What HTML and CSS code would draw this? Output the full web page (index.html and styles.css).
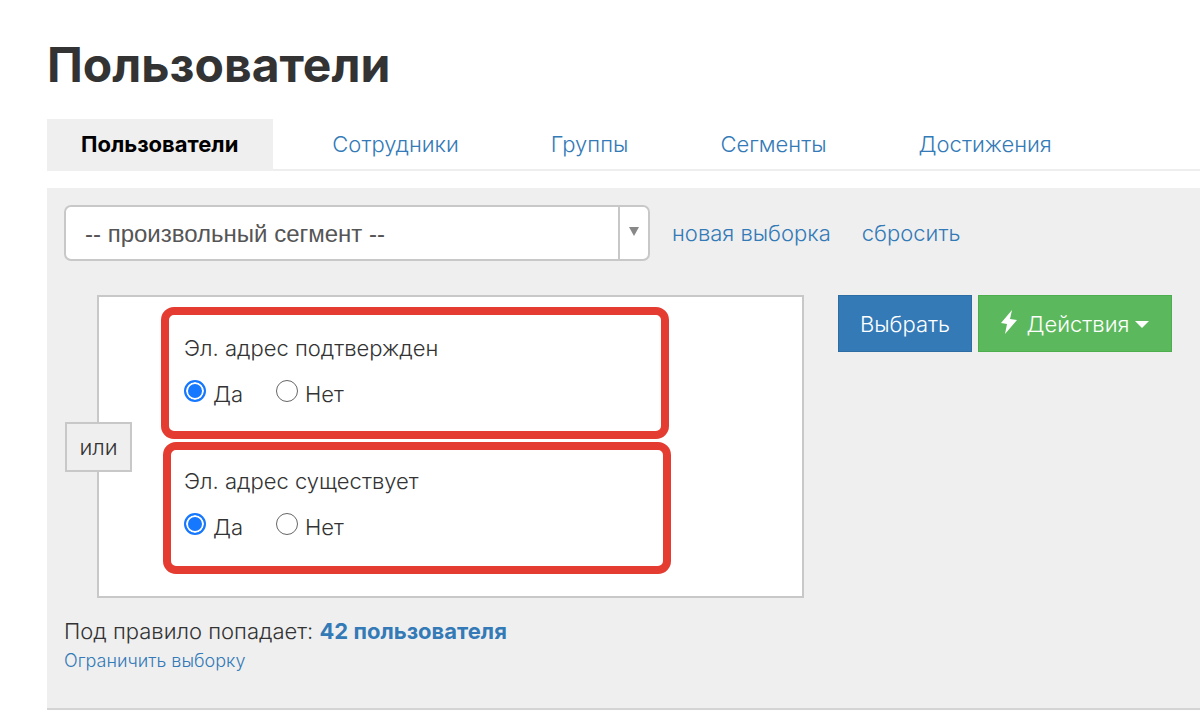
FILE: index.html
```html
<!DOCTYPE html>
<html lang="ru">
<head>
    <meta charset="UTF-8">
    <meta name="viewport" content="width=device-width, initial-scale=1.0">
    <title>Пользователи</title>
    <link rel="stylesheet" href="styles.css">
</head>
<body>
    <h1>Пользователи</h1>
    <nav class="tabs">
        <a class="tab active" href="#users">Пользователи</a>
        <a class="tab" href="#staff">Сотрудники</a>
        <a class="tab" href="#groups">Группы</a>
        <a class="tab" href="#segments">Сегменты</a>
        <a class="tab" href="#achievements">Достижения</a>
    </nav>
    <main class="panel">
        <div class="segment-row">
            <div class="segment-select">
                <select id="segment" aria-label="Сегмент">
                    <option>-- произвольный сегмент --</option>
                </select>
                <span class="segment-arrow"></span>
            </div>
            <a href="#new">новая выборка</a>
            <a href="#reset">сбросить</a>
        </div>
        <div class="filter-row">
            <div class="rules">
                <button class="operator" type="button">или</button>
                <fieldset class="rule">
                    <legend>Эл. адрес подтвержден</legend>
                    <div class="options">
                        <label><input type="radio" name="confirmed" checked><span>Да</span></label>
                        <label><input type="radio" name="confirmed"><span>Нет</span></label>
                    </div>
                </fieldset>
                <fieldset class="rule rule-last">
                    <legend>Эл. адрес существует</legend>
                    <div class="options">
                        <label><input type="radio" name="exists" checked><span>Да</span></label>
                        <label><input type="radio" name="exists"><span>Нет</span></label>
                    </div>
                </fieldset>
            </div>
            <div class="actions">
                <button class="btn btn-primary" type="button">Выбрать</button>
                <button class="btn btn-success" type="button">
                    <svg width="16" height="24" viewBox="0 0 16 24" aria-hidden="true"><path d="M11 0 L0 13 L6 14 L4 24 L16 10 L9 9 Z" fill="#fff"/></svg>
                    <span>Действия</span>
                    <span class="caret"></span>
                </button>
            </div>
        </div>
        <p class="total">Под правило попадает: <a href="#found">42 пользователя</a></p>
        <a class="limit" href="#limit">Ограничить выборку</a>
    </main>
</body>
</html>
```
FILE: styles.css
```css
:root {
    --link-color: #337ab7;
    --text-color: #333;
    --panel-color: #efefef;
    --border-color: #c8c8c8;
    --mark-color: #e43c30;
}
* {
    box-sizing: border-box;
}
body {
    margin: 0;
    padding: 35px 0 0 47px;
    font-family: Inter, 'Noto Sans', sans-serif;
    font-size: 22px;
    font-weight: 300;
    line-height: 30px;
    background-color: #fff;
    color: var(--text-color);
}
a {
    color: var(--link-color);
    text-decoration: none;
}
h1 {
    margin: 0 0 24px;
    font-size: 48px;
    font-weight: 700;
    line-height: 60px;
}
.tabs {
    display: flex;
    gap: 26px;
    border-bottom: 2px solid #eee;
}
.tab {
    padding: 10px 33px;
}
.tab.active {
    margin-bottom: -2px;
    padding: 10px 35px 12px 34px;
    background-color: var(--panel-color);
    color: #000;
    font-weight: 700;
}
.panel {
    margin-top: 17px;
    padding: 17px 28px 32px 17px;
    background-color: var(--panel-color);
    border-bottom: 2px solid #d4d4d4;
}
.segment-row {
    display: flex;
    align-items: center;
    gap: 31px;
    margin-bottom: 34px;
}
.segment-select {
    display: flex;
    width: 586px;
    height: 56px;
    margin-right: -9px;
    background-color: #fff;
    border: 2px solid var(--border-color);
    border-radius: 7px;
}
.segment-select select {
    flex: 1;
    appearance: none;
    padding: 0 19px;
    border: none;
    background: none;
    color: #555;
    font-family: 'Liberation Sans', Arial, sans-serif;
    font-size: 24px;
}
.segment-arrow {
    display: flex;
    align-items: center;
    justify-content: center;
    width: 30px;
    border-left: 2px solid var(--border-color);
}
.segment-arrow::before {
    content: '';
    margin-bottom: 3px;
    border: 5px solid transparent;
    border-top: 9px solid #888;
    border-bottom: none;
}
.filter-row {
    display: flex;
    align-items: flex-start;
    gap: 34px;
    padding-left: 33px;
}
.rules {
    position: relative;
    flex: 1;
    padding: 10px 133px 22px 62px;
    background-color: #fff;
    border: 2px solid var(--border-color);
}
.operator {
    position: absolute;
    top: 50%;
    left: -34px;
    width: 67px;
    height: 50px;
    margin-top: -25px;
    border: 2px solid var(--border-color);
    background-color: var(--panel-color);
    color: var(--text-color);
    font: inherit;
}
.rule {
    min-width: 0;
    height: 132px;
    margin: 0;
    padding: 18px 15px;
    border: 8px solid var(--mark-color);
    border-radius: 13px;
}
.rule legend {
    float: left;
    width: 100%;
    padding: 0;
}
.rule-last {
    margin: 3px -2px 0 2px;
    padding: 16px 13px;
}
.options {
    display: flex;
    clear: both;
    gap: 33px;
    padding-top: 14px;
}
.options label {
    display: flex;
    gap: 7px;
}
.options span {
    padding-top: 2px;
}
.options input {
    appearance: none;
    width: 22px;
    height: 22px;
    margin: 3px 0;
    border: 1px solid #666;
    border-radius: 50%;
    background-color: #fff;
}
.options input:checked {
    border: 2px solid #1677ff;
    background-color: #1677ff;
    box-shadow: inset 0 0 0 2px #fff;
}
.actions {
    display: flex;
    gap: 6px;
}
.btn {
    display: flex;
    align-items: center;
    justify-content: center;
    gap: 6px;
    height: 57px;
    padding: 0;
    border: 1px solid;
    color: #fff;
    font: inherit;
}
.btn svg {
    margin: 0 4px 4px 0;
}
.btn-primary {
    width: 134px;
    background-color: #337ab7;
    border-color: #2e6da4;
}
.btn-success {
    width: 194px;
    background-color: #5cb85c;
    border-color: #4cae4c;
}
.caret {
    margin-top: 2px;
    border: 7px solid transparent;
    border-top-color: #fff;
    border-bottom: none;
}
.total {
    margin: 18px 0 0;
}
.total a {
    font-weight: 700;
}
.limit {
    display: block;
    font-size: 18px;
}
```
